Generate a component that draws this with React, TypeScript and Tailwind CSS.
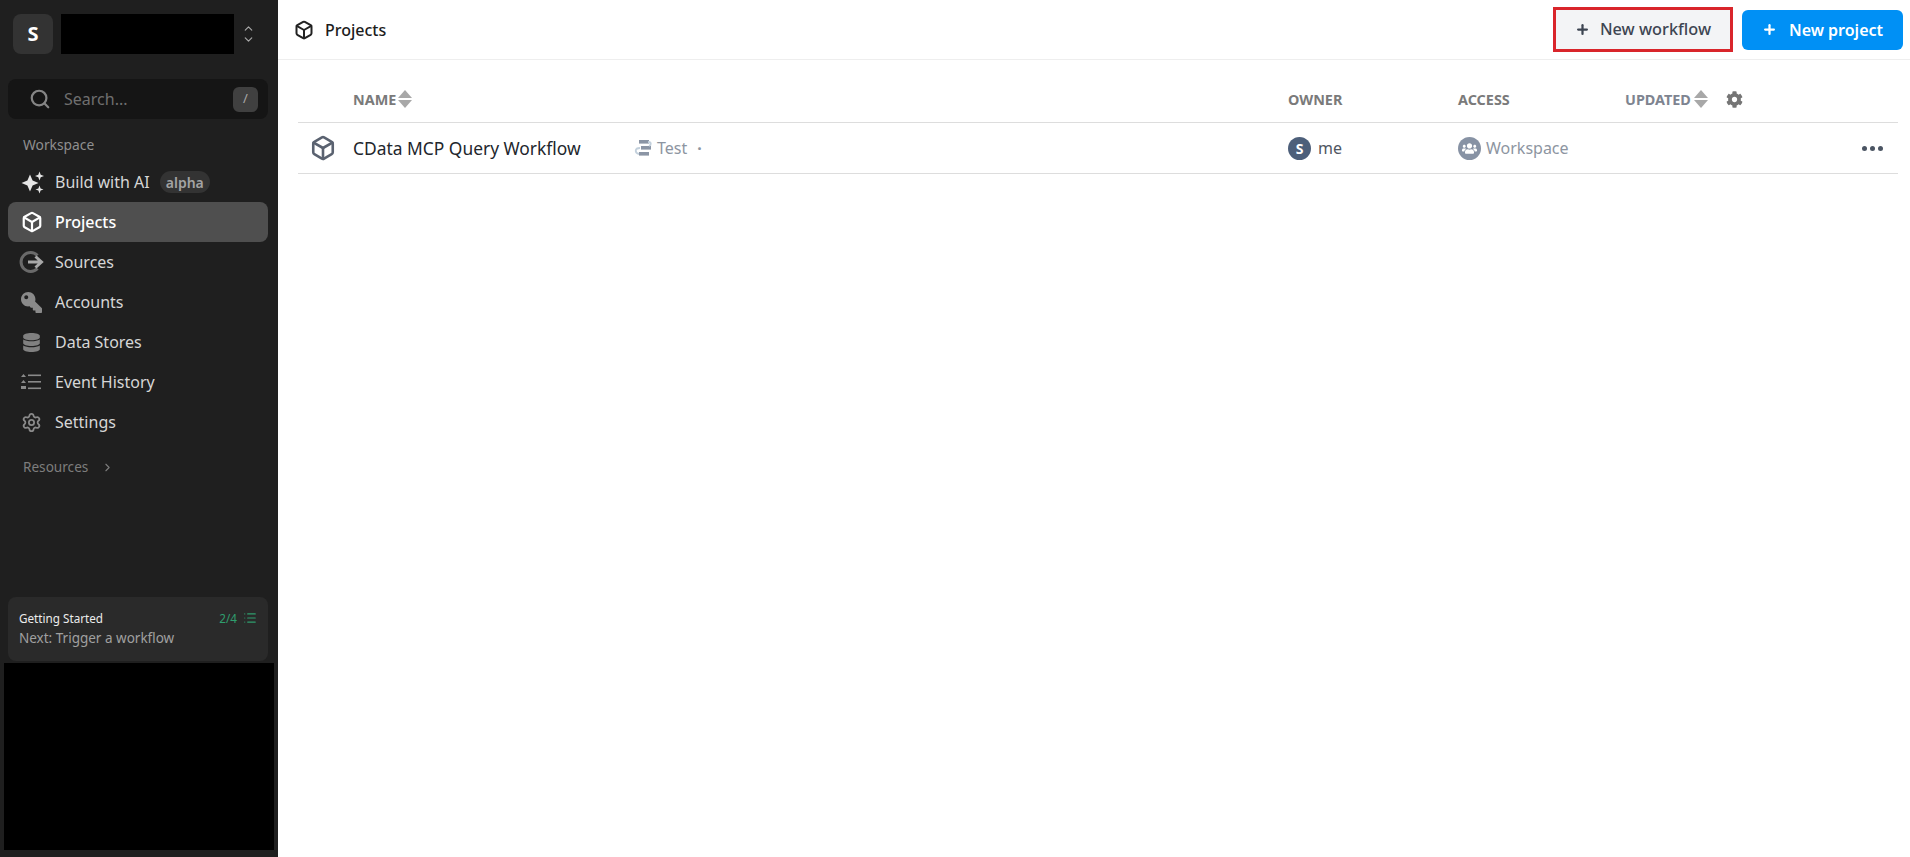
import React from "react";
import { Box, Search, ChevronUp, ChevronDown, ChevronRight, Settings, Plus, List } from "lucide-react";
import { FaCog, FaDatabase, FaKey, FaUsers } from "react-icons/fa";

const font = "font-['Noto_Sans','Open_Sans',sans-serif]";

function Sparkle() {
  return (
    <svg width="24" height="24" viewBox="0 0 24 24" fill="#e5e5e5">
      <path d="M9 4.5 L11.6 10.4 L17.5 13 L11.6 15.6 L9 21.5 L6.4 15.6 L0.5 13 L6.4 10.4 Z" />
      <path d="M18.5 1.5 L19.7 4.8 L23 6 L19.7 7.2 L18.5 10.5 L17.3 7.2 L14 6 L17.3 4.8 Z" />
      <path d="M18.5 15.5 L19.6 18.4 L22.5 19.5 L19.6 20.6 L18.5 23.5 L17.4 20.6 L14.5 19.5 L17.4 18.4 Z" />
    </svg>
  );
}

function SourceIcon() {
  return (
    <svg width="26" height="24" viewBox="0 0 26 24" fill="none">
      <path d="M18.5 5.5 A9.5 9.5 0 1 0 18.5 18.5" stroke="#6a6a6a" strokeWidth="3" />
      <path d="M9 12 H22 M16.5 6.5 L22.5 12 L16.5 17.5" stroke="#a8a8a8" strokeWidth="3" />
    </svg>
  );
}

function EventIcon() {
  return (
    <svg width="20" height="18" viewBox="0 0 20 18" fill="#8a8a8a">
      <path d="M2.5 1 L5 4 H0 Z M2.5 7 L5 10 H0 Z" />
      <rect x="0" y="13" width="5" height="3" />
      <rect x="7" y="1.5" width="13" height="1.6" />
      <rect x="7" y="8" width="13" height="1.6" />
      <rect x="7" y="14.5" width="13" height="1.6" />
    </svg>
  );
}

function FlowIcon() {
  return (
    <svg width="18" height="18" viewBox="0 0 18 18" fill="none">
      <rect x="5" y="1" width="10" height="3.6" fill="#8b95a5" />
      <rect x="7" y="7" width="10" height="3.6" fill="#8b95a5" />
      <rect x="5" y="13" width="10" height="3.6" fill="#8b95a5" />
      <path d="M14 3 C17.5 3 17.5 6 15 7 M6 9 C0.5 9 0.5 14 5 15" stroke="#c3d0dc" strokeWidth="1.8" />
    </svg>
  );
}

function SortIcon() {
  return (
    <svg width="14" height="18" viewBox="0 0 14 18" fill="#a8a8a8">
      <path d="M7 0 L14 8 H0 Z M0 10 H14 L7 18 Z" />
    </svg>
  );
}

function NavItem({ icon, label, active, extra }: { icon: React.ReactNode; label: string; active?: boolean; extra?: React.ReactNode }) {
  return (
    <div className={`flex h-10 items-center rounded-lg pl-[13px] ${active ? "bg-[#4f4f4f] text-white font-medium" : "text-[#d6d6d6]"}`}>
      <span className="flex w-[34px] shrink-0 items-center">{icon}</span>
      <span className="text-[16px] leading-none">{label}</span>
      {extra}
    </div>
  );
}

function Sidebar() {
  return (
    <aside className="flex h-[857px] w-[278px] shrink-0 flex-col bg-[#1f1f1f]">
      <div className="flex items-center pl-[13px] pt-[14px]">
        <div className="flex h-10 w-10 items-center justify-center rounded-lg bg-[#333333] text-[20px] font-bold text-white">S</div>
        <div className="ml-2 h-10 w-[173px] bg-black" />
        <div className="ml-[8px] flex flex-col items-center text-[#a8a8a8]">
          <ChevronUp size={13} strokeWidth={2.2} className="-mb-[2px]" />
          <ChevronDown size={13} strokeWidth={2.2} />
        </div>
      </div>
      <div className="ml-2 mr-[10px] mt-[25px] flex h-10 items-center rounded-lg bg-[#151515] pl-[21px] pr-[10px]">
        <Search size={22} strokeWidth={2.4} className="text-[#858585]" />
        <span className="ml-[13px] text-[16px] text-[#6f6f6f]">Search...</span>
        <span className="ml-auto flex h-[25px] w-[25px] items-center justify-center rounded-md bg-[#404040] text-[13px] text-[#a8a8a8]">/</span>
      </div>
      <div className="ml-[23px] mt-[16px] text-[13.8px] leading-5 text-[#8f8f8f]">Workspace</div>
      <nav className="ml-2 mr-[10px] mt-[7px] flex flex-col">
        <NavItem icon={<Sparkle />} label="Build with AI" extra={<span className="ml-[10px] flex h-[22px] items-center rounded-full bg-[#333333] px-[6px] text-[14px] font-semibold text-[#a3a3a3]">alpha</span>} />
        <NavItem active icon={<Box size={22} strokeWidth={2.4} />} label="Projects" />
        <NavItem icon={<span className="-ml-[2px]"><SourceIcon /></span>} label="Sources" />
        <NavItem icon={<FaKey size={21} className="-scale-x-100 text-[#8a8a8a]" />} label="Accounts" />
        <NavItem icon={<FaDatabase size={19} className="ml-[1px] text-[#808080]" />} label="Data Stores" />
        <NavItem icon={<EventIcon />} label="Event History" />
        <NavItem icon={<Settings size={21} strokeWidth={2} className="text-[#8a8a8a]" />} label="Settings" />
      </nav>
      <div className="ml-[23px] mt-[15px] flex items-center text-[13.6px] leading-5 text-[#7d7d7d]">
        Resources
        <ChevronRight size={13} strokeWidth={2} className="ml-[13px]" />
      </div>
      <div className="ml-2 mr-[10px] mt-auto h-[64px] rounded-lg bg-[#2a2a2a] px-[11px] pt-[12px]">
        <div className="flex items-center justify-between text-[11.7px] leading-[18px] text-[#ececec]">
          <span>Getting Started</span>
          <span className="flex items-center gap-[6px] text-[#2f9e6e]">2/4 <List size={14} strokeWidth={2} /></span>
        </div>
        <div className="mt-[1px] text-[13.5px] leading-[20px] text-[#a0a0a0]">Next: Trigger a workflow</div>
      </div>
      <div className="mx-1 mb-[7px] mt-[2px] h-[187px] bg-black" />
    </aside>
  );
}

function Header() {
  return (
    <header className="flex h-[60px] items-center border-b border-[#eeeeee] pl-[16px] pr-[7px]">
      <Box size={20} strokeWidth={2.4} className="text-[#222222]" />
      <h1 className="ml-[11px] text-[16px] font-medium text-[#1c1c1c]">Projects</h1>
      <div className="ml-auto flex items-center gap-[9px]">
        <button className="-mt-[1px] flex h-[45px] w-[180px] items-center justify-center gap-[10px] border-[3px] border-[#d9252b] bg-[#f3f4f6] text-[16.3px] font-medium text-[#3d4552]">
          <Plus size={15} strokeWidth={3.6} />
          New workflow
        </button>
        <button className="flex h-10 w-[161px] items-center justify-center gap-[12px] rounded-md bg-[#0090f5] text-[16px] font-semibold text-white">
          <Plus size={15} strokeWidth={3.6} />
          New project
        </button>
      </div>
    </header>
  );
}

const cols = "grid grid-cols-[55px_935px_170px_167px_1fr] items-center";

function Table() {
  return (
    <div className="ml-[20px] mr-[12px]">
      <div className={`${cols} mt-[1px] h-[62px] pt-[16px] border-b border-[#dddddd] text-[14.4px] font-bold text-[#7a7a7a]`}>
        <span />
        <span className="flex items-center gap-[2px]">NAME <SortIcon /></span>
        <span>OWNER</span>
        <span>ACCESS</span>
        <span className="flex items-center">
          <span className="text-[#7e8490]">UPDATED</span>
          <span className="ml-[3px]"><SortIcon /></span>
          <FaCog size={17} className="ml-[18px] text-[#757575]" />
        </span>
      </div>
      <div className={`${cols} h-[51px] border-b border-[#dddddd]`}>
        <span className="pl-[12px]"><Box size={26} strokeWidth={2.4} className="text-[#5a6270]" /></span>
        <span className="flex items-center">
          <span className="w-[281px] text-[17.4px] text-[#22262c]">CData MCP Query Workflow</span>
          <FlowIcon />
          <span className="ml-[5px] text-[16px] text-[#8d95a1]">Test</span>
          <span className="ml-[10px] text-[16px] font-bold text-[#8d95a1]">·</span>
        </span>
        <span className="flex items-center">
          <span className="flex h-[23px] w-[23px] items-center justify-center rounded-full bg-[#4d5f7a] text-[14px] font-bold text-white">S</span>
          <span className="ml-[7px] text-[16px] text-[#4f5662]">me</span>
        </span>
        <span className="flex items-center">
          <span className="flex h-[23px] w-[23px] items-center justify-center rounded-full bg-[#8792a4] text-white"><FaUsers size={15} /></span>
          <span className="ml-[5px] text-[16px] text-[#8d95a1]">Workspace</span>
        </span>
        <span className="flex justify-end gap-[3px] pr-[15px]">
          <span className="h-[5px] w-[5px] rounded-full bg-[#4b5563]" />
          <span className="h-[5px] w-[5px] rounded-full bg-[#4b5563]" />
          <span className="h-[5px] w-[5px] rounded-full bg-[#4b5563]" />
        </span>
      </div>
    </div>
  );
}

export default function App() {
  return (
    <div className={`flex h-[857px] w-[1910px] overflow-hidden bg-white ${font}`}>
      <Sidebar />
      <main className="flex-1">
        <Header />
        <Table />
      </main>
    </div>
  );
}
